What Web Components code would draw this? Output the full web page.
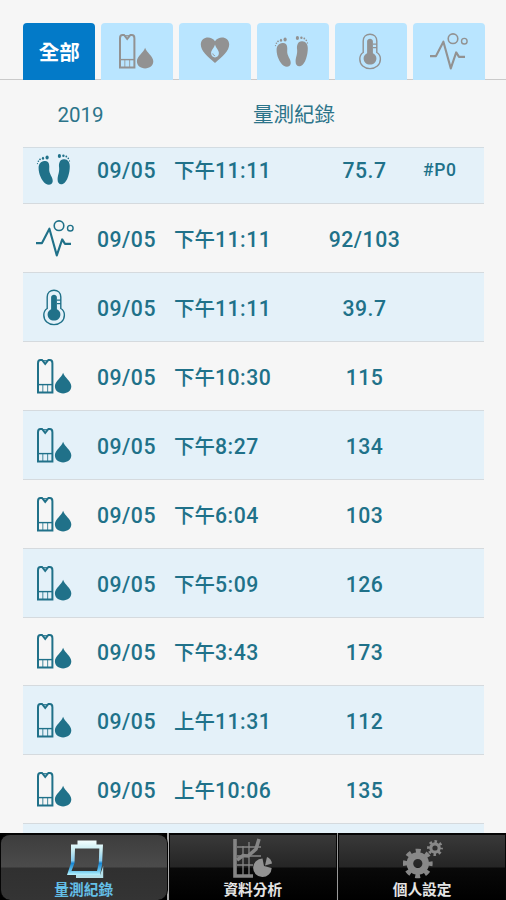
<!DOCTYPE html>
<html lang="zh-Hant">
<head>
<meta charset="utf-8">
<title>量測紀錄</title>
<style>
html,body{margin:0;height:100%;background:#f6f6f6;overflow:hidden}
body{font-family:Roboto,"Noto Sans CJK TC",sans-serif}
</style>
</head>
<body>
<health-app></health-app>
<script>
const ICONS = {
  meter: `<g fill="none" stroke="currentColor"><path stroke-width="2" d="M2 34.4V5.2Q2 2 4.5 2H6L9.2 6L12.4 2H13.8Q16.4 2 16.4 5.2V34.4Z"/><path stroke-width="1.4" d="M2 26.6H16.4"/><path stroke-width="1.1" opacity=".75" d="M6.8 26.5V34M11.6 26.5V34"/><path stroke-width="1.3" d="M7 2.8H11.4"/></g><path fill="currentColor" d="M27.1 14.8C28.5 19.5 35.3 23.4 35.3 28.3C35.3 32.6 31.6 35.4 27.1 35.4S18.9 32.6 18.9 28.3C18.9 23.4 25.7 19.5 27.1 14.8Z"/>`,
  heart: `<path fill="currentColor" fill-rule="evenodd" d="M19 30C11.5 23.8 4.8 17.9 4.8 11.6C4.8 3.6 15 2.2 19 8.3C23 2.2 33.2 3.6 33.2 11.6C33.2 17.9 26.5 23.8 19 30ZM19 11.5C18.1 15 15.1 17 15.1 20C15.1 22.9 16.9 24.4 19 24.4S22.9 22.9 22.9 20C22.9 17 19.9 15 19 11.5Z"/><path fill="none" stroke="currentColor" stroke-width=".8" d="M16.7 20.4Q17.1 22.6 19.1 22.8"/>`,
  feet: `<g fill="currentColor" transform="translate(0 .9)"><path d="M8.3 9.1C13 8.3 13.7 13 13.2 17C12.8 22 17.3 25.5 16.7 29.5C16.1 32.8 12.8 33.8 9.7 31.8C5.5 28.5 2.6 21.8 2.6 16C2.6 12 4.8 9.6 8.3 9.1Z"/><ellipse cx="11.1" cy="5.6" rx="1.6" ry="2.1"/><ellipse cx="7" cy="6.3" rx="1.1" ry="1.5"/><circle cx="4" cy="7.4" r=".9"/><circle cx="2.4" cy="9.3" r=".8"/><circle cx="1.5" cy="11.7" r=".6"/><path d="M28.3 7.3C23.6 7 22.6 11.5 23.1 15.5C23.6 20.5 21.6 23 21.6 27.8C21.6 31.5 24 33 26.8 32C31.5 30.2 33.8 20.5 33.8 14.3C33.8 10 31.8 7.6 28.3 7.3Z"/><ellipse cx="23.4" cy="4.2" rx="1.6" ry="2"/><circle cx="27.4" cy="3.8" r="1.2"/><circle cx="30.3" cy="4.6" r=".9"/><circle cx="32.3" cy="6.5" r=".8"/><circle cx="33.5" cy="9" r=".6"/></g>`,
  thermo: `<path fill="none" stroke="currentColor" stroke-width="1.4" d="M11.2 19.5V8C11.2 3.7 14.2 1.2 18 1.2S24.8 3.7 24.8 8V19.5C27.4 21 28.4 23.5 28.4 26C28.4 32 23.8 35.6 18 35.6S7.8 32 7.8 26C7.8 23.4 8.9 21 11.2 19.5Z"/><path fill="currentColor" d="M15.1 8.4C15.1 4.8 20.9 4.8 20.9 8.4V20.3C23.3 21.3 24.4 23.4 24.4 25.4C24.4 29.1 21.5 31.6 18 31.6S11.6 29.1 11.6 25.4C11.6 23.4 12.8 21.3 15.1 20.3Z"/><path stroke="currentColor" stroke-width="1.2" d="M21 11.1H25M21 14.6H25"/>`,
  pulse: `<g fill="none" stroke="currentColor" transform="translate(0 -.6)"><path stroke-width="2.1" stroke-linejoin="round" d="M0 23.7H6L13.4 9.3L20.8 36L26.2 20L29 24.5H35"/><circle cx="23" cy="6.3" r="4.8" stroke-width="1.6"/><circle cx="34.3" cy="8.8" r="2.8" stroke-width="1.4"/></g>`,
  clipboard: `<defs><linearGradient id="g" x2="0" y2="1"><stop offset="0" stop-color="#f4ffff"/><stop offset=".3" stop-color="#c5eaf0"/><stop offset=".58" stop-color="#8acdf0"/><stop offset=".66" stop-color="#1684d1"/><stop offset=".85" stop-color="#5bbbe8"/><stop offset="1" stop-color="#b9f3ff"/></linearGradient></defs><path fill="#b4dfe9" d="M12 34H36L39.2 25V37H12Z"/><path fill="url(#g)" fill-rule="evenodd" d="M7 3.5H13.5V-.5H32.5V3.5H39L38 24L36 34H3L7 22ZM11 7.5L10.5 22L7.5 30H33L34.8 22L35.3 7.5Z"/>`,
  chart: `<g fill="none" stroke="#858585"><path stroke-width="3.6" d="M2 -2V35H20"/><path stroke-width="1.3" d="M10 5V34M16 1V34M4 6H28M4 15H28M4 24H20"/><path stroke-width="3.6" d="M4 19L10 14.5L15 15L23 8L26 -2"/></g><path fill="#929292" d="M29.5 17.5L31 25L38.7 27A9.3 9.3 0 1 1 29.5 17.5Z"/><path fill="#929292" d="M34 16A8.5 8.5 0 0 1 39 22.5L32 24.5Z"/>`,
  gears: `<g fill="none" stroke="#888"><circle cx="15.8" cy="22.5" r="7.9" stroke-width="6.6"/><circle cx="15.8" cy="22.5" r="12.6" stroke-width="4.5" stroke-dasharray="4.95 4.95" stroke-dashoffset="2.47"/><circle cx="33" cy="7" r="4.2" stroke-width="3.2"/><circle cx="33" cy="7" r="6.5" stroke-width="2.8" stroke-dasharray="2.55 2.55" stroke-dashoffset="1.27"/></g>`
};

function define(name, render) {
  customElements.define(name, class extends HTMLElement {
    connectedCallback() {
      if (this.shadowRoot) return;
      this.attachShadow({mode: "open"}).innerHTML = render(this);
    }
  });
}

define("ui-icon", el => `<style>
:host{display:block;width:37px;height:37px;flex:none}
svg{display:block;width:100%;height:100%;overflow:visible}
</style><svg viewBox="0 0 ${el.getAttribute("box") || "37 37"}">${ICONS[el.getAttribute("name")]}</svg>`);

define("category-tab", () => `<style>
:host{display:flex;align-items:center;justify-content:center;box-sizing:border-box;height:56.5px;background:#b9e5ff;border-radius:4px 4px 0 0;color:#929292;font:700 20.5px/1 "Noto Sans CJK TC",sans-serif;padding-right:1.5px}
:host([active]){background:#037ac8;color:#fff;padding-right:0}
</style><slot></slot>`);

define("category-tabs", () => `<style>
:host{display:grid;grid-template-columns:repeat(6,72px);column-gap:5.9px;padding:23px 0 0 23.3px;height:56px;border-bottom:1.5px solid #cacaca}
</style><slot></slot>`);

define("list-heading", () => `<style>
:host{display:grid;grid-template-columns:115px 312px;box-sizing:border-box;padding:4px 0 0 23px;height:66.5px;align-items:center;text-align:center;color:#2c748a;font-size:20.5px;line-height:1}
span:first-child{font-size:21px}
</style><slot></slot>`);

define("record-row", el => `<style>
:host{display:grid;grid-template-columns:74px 77px 142px 97px 71px;align-items:center;box-sizing:border-box;height:68.87px;border-bottom:1.5px solid #d5dade;color:#207189;font-weight:500;font-size:21.2px;letter-spacing:.5px;line-height:30px;padding-top:4px}
:host(:nth-child(odd)){background:#e4f1f9}
ui-icon{margin:-3px 0 0 13px}
.cjk{font-weight:500;font-size:20.5px;letter-spacing:0}
.value{text-align:center}
.tag{font-size:17.5px;letter-spacing:.7px;padding-left:10px;margin-top:-2px;line-height:26px}
</style><ui-icon name="${el.getAttribute("icon")}"></ui-icon><span>09/05</span>
<span><span class="cjk">${el.getAttribute("time").slice(0,2)}</span>${el.getAttribute("time").slice(2)}</span>
<span class="value">${el.getAttribute("value")}</span><span class="tag">${el.getAttribute("tag") || ""}</span>`);

define("record-list", () => `<style>
:host{display:block;box-sizing:border-box;margin:0 22px 0 23px;height:686.5px;overflow:hidden;border-top:1.5px solid #d3dce2}
div{margin-top:-12px}
</style><div><slot></slot></div>`);

define("nav-item", el => `<style>
:host{display:flex;flex-direction:column;align-items:center;box-sizing:border-box;height:67px;padding-top:6px;background:linear-gradient(#393939,#252525 49%,#090909 51%,#000);border:solid #050505;border-width:2px 1px 0;color:#e4e4e4;font:700 14.7px/16px "Noto Sans CJK TC",sans-serif}
:host([active]){border-radius:10px;background:linear-gradient(#3d3d3d,#4b4b4b 49%,#303030 51%,#343434);color:#64bfe7}
ui-icon{width:40px;height:39px;margin-bottom:1px}
</style><ui-icon name="${el.getAttribute("icon")}" box="40 39"></ui-icon><slot></slot>`);

define("bottom-nav", () => `<style>
:host{display:grid;grid-template-columns:167.5px 168px 168px;column-gap:1.3px;background:linear-gradient(90deg,#000 0 167px,#aaa 167px 169px,#000 169px 336px,#999 336px 338px,#000 338px);height:67px}
</style><slot></slot>`);

const RECORDS = [
  ["feet","下午11:11","75.7","#P0"],["pulse","下午11:11","92/103"],["thermo","下午11:11","39.7"],
  ["meter","下午10:30","115"],["meter","下午8:27","134"],["meter","下午6:04","103"],["meter","下午5:09","126"],
  ["meter","下午3:43","173"],["meter","上午11:31","112"],["meter","上午10:06","135"]
];

define("health-app", () => `<style>
:host{display:flex;flex-direction:column;width:506px;height:900px}
.last{height:20px;background:#e4f1f9}
bottom-nav{margin-top:auto}
</style>
<category-tabs><category-tab active>全部</category-tab>${["meter","heart","feet","thermo","pulse"].map(n => `<category-tab><ui-icon name="${n}"></ui-icon></category-tab>`).join("")}</category-tabs>
<list-heading><span>2019</span><span>量測紀錄</span></list-heading>
<record-list>${RECORDS.map(([i,t,v,g]) => `<record-row icon="${i}" time="${t}" value="${v}" tag="${g || ""}"></record-row>`).join("")}<div class="last"></div></record-list>
<bottom-nav><nav-item active icon="clipboard">量測紀錄</nav-item><nav-item icon="chart">資料分析</nav-item><nav-item icon="gears">個人設定</nav-item></bottom-nav>`);
</script>
</body>
</html>
